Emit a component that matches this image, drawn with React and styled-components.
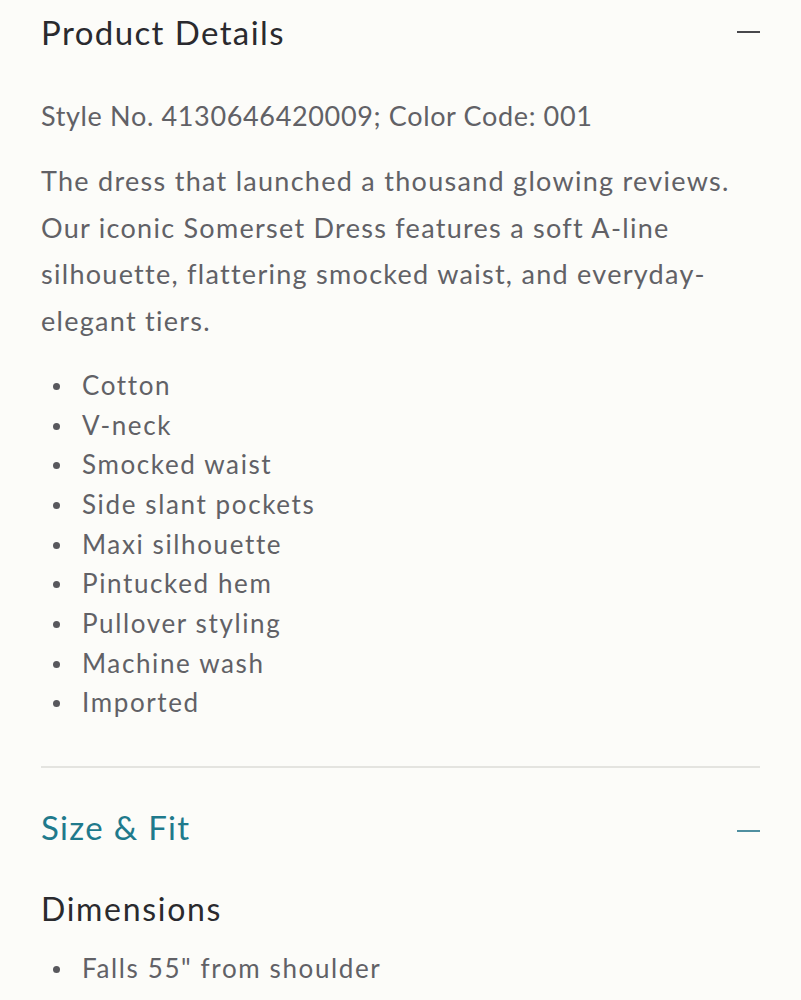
import React from "react";
import styled, { createGlobalStyle } from "styled-components";

const GlobalStyle = createGlobalStyle`
  html, body {
    margin: 0;
    padding: 0;
    background: #fcfcf9;
  }
  body {
    font-family: Lato, "Noto Sans", "Liberation Sans", sans-serif;
    -webkit-font-smoothing: antialiased;
  }
`;

const Page = styled.div`
  padding: 0 41px;
  width: 801px;
  box-sizing: border-box;
`;

const Section = styled.section`
  border-bottom: ${(p) => (p.divider ? "2px solid #e4e4e0" : "none")};
  padding-bottom: ${(p) => (p.divider ? "43px" : "0")};
`;

const Header = styled.header`
  display: flex;
  align-items: center;
  justify-content: space-between;
  height: ${(p) => p.h || 64}px;
`;

const Title = styled.h2`
  margin: 0;
  font-size: 33px;
  font-weight: 400;
  letter-spacing: ${(p) => (p.accent ? 1.3 : 1.4)}px;
  color: ${(p) => (p.accent ? "#1f7a8c" : "#2a2a2e")};
`;

const Minus = styled.span`
  display: block;
  width: 23px;
  height: 2px;
  margin-top: ${(p) => p.drop || 0}px;
  background: ${(p) => (p.accent ? "#4f8fa0" : "#48484c")};
`;

const StyleNo = styled.p`
  margin: 29px 0 0;
  font-size: 27px;
  line-height: 46px;
  letter-spacing: 0.65px;
  color: #616166;
`;

const Description = styled.p`
  margin: 19px 0 0;
  font-size: 27px;
  line-height: 46.7px;
  letter-spacing: 1.28px;
  color: #616166;
`;

const List = styled.ul`
  list-style: none;
  margin: ${(p) => p.top || 21}px 0 0;
  padding: 0;
`;

const Item = styled.li`
  position: relative;
  padding-left: 41px;
  font-size: 26px;
  line-height: 39.7px;
  letter-spacing: 1.62px;
  color: #616166;

  &::before {
    content: "";
    position: absolute;
    left: 12px;
    top: 17px;
    width: 7px;
    height: 7px;
    border-radius: 50%;
    background: #58585d;
  }
`;

const SubTitle = styled.h3`
  margin: 3px 0 0;
  font-size: 32px;
  font-weight: 400;
  letter-spacing: 1.7px;
  color: #2a2a2e;
  line-height: 40px;
`;

const features = [
  "Cotton",
  "V-neck",
  "Smocked waist",
  "Side slant pockets",
  "Maxi silhouette",
  "Pintucked hem",
  "Pullover styling",
  "Machine wash",
  "Imported",
];

function App() {
  return (
    <>
      <GlobalStyle />
      <Page>
        <Section divider>
          <Header>
            <Title>Product Details</Title>
            <Minus />
          </Header>
          <StyleNo>Style No. 4130646420009; Color Code: 001</StyleNo>
          <Description>
            The dress that launched a thousand glowing reviews. Our iconic
            Somerset Dress features a soft A-line silhouette, flattering
            smocked waist, and everyday-elegant tiers.
          </Description>
          <List>
            {features.map((f) => (
              <Item key={f}>{f}</Item>
            ))}
          </List>
        </Section>
        <Section>
          <Header h={118}>
            <Title accent>Size &amp; Fit</Title>
            <Minus accent drop={8} />
          </Header>
          <SubTitle>Dimensions</SubTitle>
          <List top={20}>
            <Item>Falls 55" from shoulder</Item>
          </List>
        </Section>
      </Page>
    </>
  );
}

export default App;
